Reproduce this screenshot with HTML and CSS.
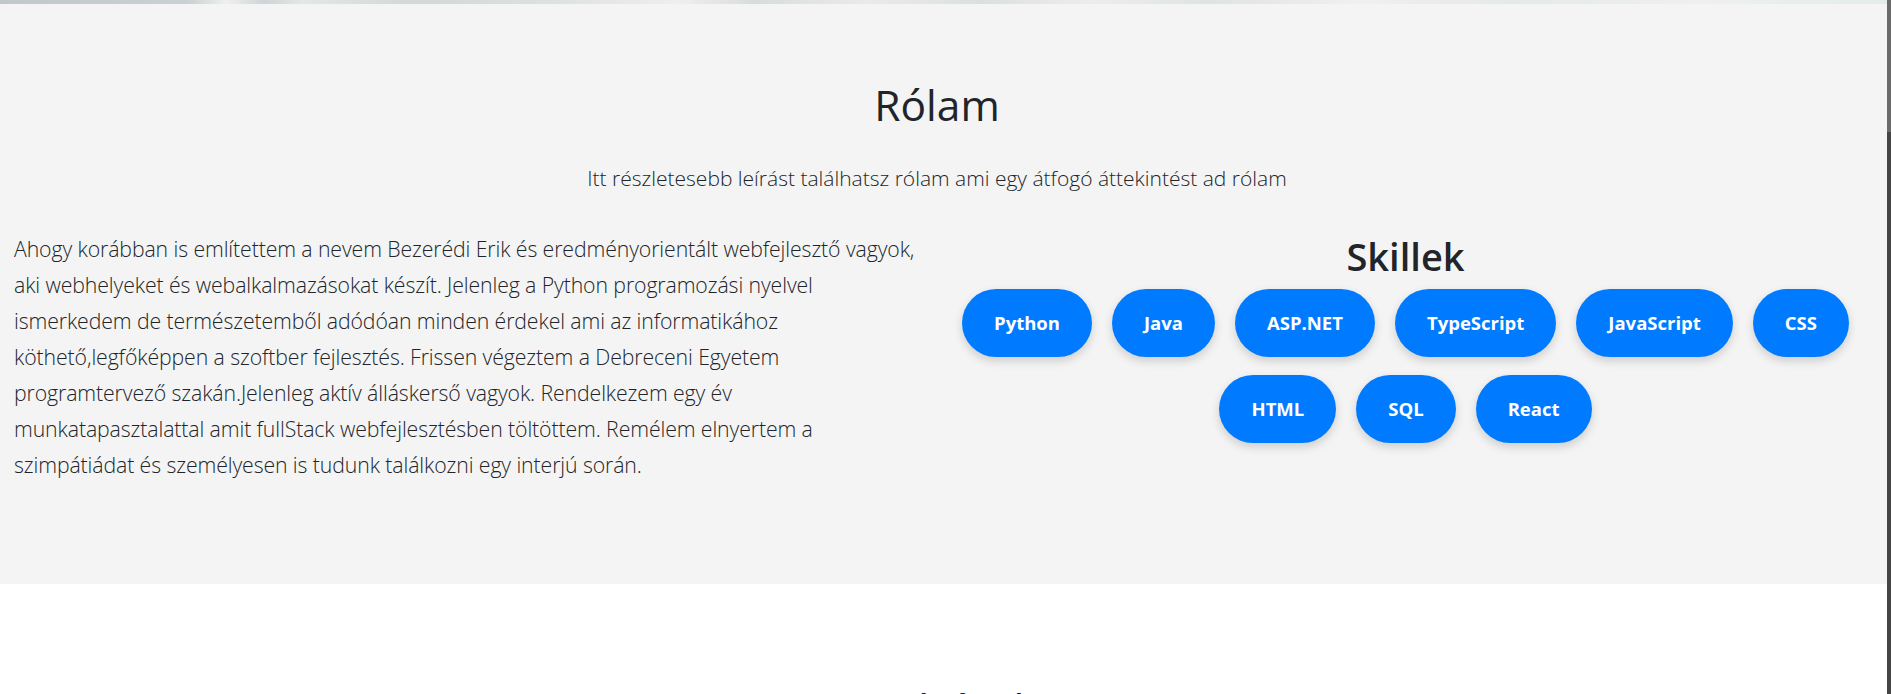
FILE: index.html
```html
<!DOCTYPE html>
<html lang="hu">
<head>
<meta charset="utf-8">
<title>Rólam</title>
<link rel="stylesheet" href="styles.css">
</head>
<body>
<div class="page">
  <main class="main">
    <div class="hero-strip"></div>
    <section class="about">
      <div class="about-inner">
        <h1 class="title">Rólam</h1>
        <p class="lead">Itt részletesebb leírást találhatsz rólam ami egy átfogó áttekintést ad rólam</p>
        <div class="row">
          <div class="col text-col">
            <p class="bio">Ahogy korábban is említettem a nevem Bezerédi Erik és eredményorientált webfejlesztő vagyok, aki webhelyeket és webalkalmazásokat készít. Jelenleg a Python programozási nyelvel ismerkedem de természetemből adódóan minden érdekel ami az informatikához köthető,legfőképpen a szoftber fejlesztés. Frissen végeztem a Debreceni Egyetem programtervező szakán.Jelenleg aktív álláskerső vagyok. Rendelkezem egy év munkatapasztalattal amit fullStack webfejlesztésben töltöttem. Remélem elnyertem a szimpátiádat és személyesen is tudunk találkozni egy interjú során.</p>
          </div>
          <div class="col skills-col">
            <h2 class="skills-title">Skillek</h2>
            <div class="pills">
              <span class="pill">Python</span>
              <span class="pill">Java</span>
              <span class="pill">ASP.NET</span>
              <span class="pill">TypeScript</span>
              <span class="pill">JavaScript</span>
              <span class="pill">CSS</span>
              <span class="pill">HTML</span>
              <span class="pill">SQL</span>
              <span class="pill">React</span>
            </div>
          </div>
        </div>
      </div>
    </section>
    <section class="next">
      <h2 class="next-title">Tanulmányok</h2>
    </section>
  </main>
  <div class="scrollbar"><div class="thumb"></div></div>
</div>
</body>
</html>
```
FILE: styles.css
```css
* { box-sizing: border-box; }
html, body { margin: 0; padding: 0; }
body {
  font-family: "Open Sans", "Noto Sans", "Liberation Sans", sans-serif;
  color: #212529;
  background: #ffffff;
  overflow: hidden;
  height: 694px;
}
.page {
  display: flex;
  height: 694px;
  overflow: hidden;
}
.main {
  flex: 1;
  min-width: 0;
}
.hero-strip {
  height: 4px;
  background: linear-gradient(90deg, #c2c7ca 0%, #cbd0d2 10%, #eef0f0 12%, #d0d4d6 14%, #e4e7e8 16%, #d3d7d8 22%, #dfe2e3 30%, #eeefef 36%, #d9dcdd 40%, #e9ebeb 46%, #dcdfe0 52%, #eceeee 58%, #e0e3e3 64%, #eff0f0 72%, #e6e9e9 80%, #eef0f0 90%, #e4ecea 100%);
}
.about {
  background: #f4f4f4;
  padding: 77px 13px 101px 0;
}
.title {
  margin: 0;
  text-align: center;
  font-size: 42.5px;
  line-height: 48px;
  font-weight: 400;
}
.lead {
  margin: 34px 0 0;
  text-align: center;
  font-size: 21px;
  line-height: 30px;
  font-weight: 300;
}
.row {
  display: flex;
  margin-top: 38px;
}
.col {
  flex: 1 1 0;
  min-width: 0;
  padding: 0 12px;
}
.bio {
  margin: 0 0 0 2px;
  font-size: 21.25px;
  letter-spacing: -0.1px;
  line-height: 36px;
  font-weight: 300;
}
.skills-title {
  margin: 1px 0 0;
  text-align: center;
  font-size: 38px;
  line-height: 48px;
  font-weight: 600;
}
.pills {
  display: flex;
  flex-wrap: wrap;
  justify-content: center;
  gap: 18px 20px;
  margin-top: 9px;
}
.pill {
  display: inline-block;
  background: #007bff;
  color: #ffffff;
  font-weight: 700;
  font-size: 18.5px;
  line-height: 28px;
  padding: 20px 32px;
  border-radius: 40px;
  box-shadow: 0 4px 10px rgba(0, 0, 0, 0.16);
}
.next {
  padding-top: 103px;
  text-align: center;
}
.next-title {
  margin: 0;
  font-size: 25.5px;
  line-height: 31px;
  font-weight: 700;
  color: #14233a;
}
.scrollbar {
  width: 4px;
  flex: 0 0 4px;
  background: #454545;
}
.thumb {
  height: 132px;
  background: #6a6a6a;
}
```
